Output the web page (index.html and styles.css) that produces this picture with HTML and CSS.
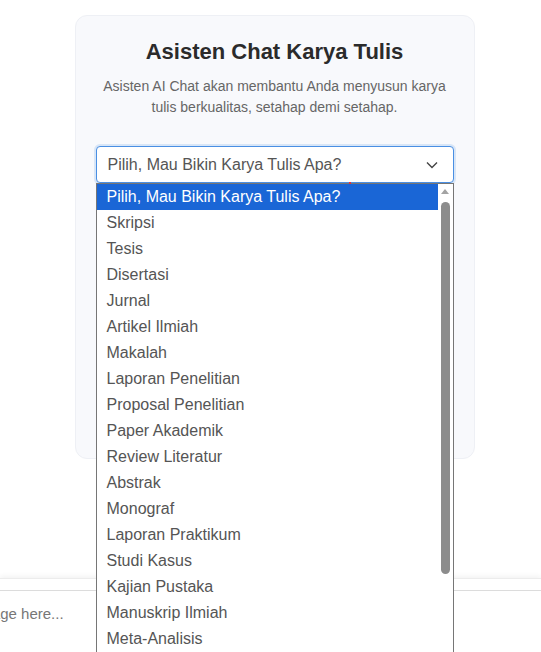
FILE: index.html
```html
<!DOCTYPE html>
<html lang="id">
<head>
<meta charset="utf-8">
<title>Asisten Chat Karya Tulis</title>
<link rel="stylesheet" href="styles.css">
</head>
<body>
<main class="page">
  <section class="card">
    <h1 class="title">Asisten Chat Karya Tulis</h1>
    <p class="subtitle">Asisten AI Chat akan membantu Anda menyusun karya tulis berkualitas, setahap demi setahap.</p>
    <div class="select-wrap">
      <div class="select">
        <span class="select-text">Pilih, Mau Bikin Karya Tulis Apa?</span>
        <svg class="chevron" width="12" height="8" viewBox="0 0 12 8"><polyline points="1,1.5 6,6.5 11,1.5" fill="none" stroke="#444" stroke-width="1.4"/></svg>
      </div>
      <span class="dot"></span>
      <div class="listbox">
        <ul class="options">
          <li class="option selected">Pilih, Mau Bikin Karya Tulis Apa?</li>
          <li class="option">Skripsi</li>
          <li class="option">Tesis</li>
          <li class="option">Disertasi</li>
          <li class="option">Jurnal</li>
          <li class="option">Artikel Ilmiah</li>
          <li class="option">Makalah</li>
          <li class="option">Laporan Penelitian</li>
          <li class="option">Proposal Penelitian</li>
          <li class="option">Paper Akademik</li>
          <li class="option">Review Literatur</li>
          <li class="option">Abstrak</li>
          <li class="option">Monograf</li>
          <li class="option">Laporan Praktikum</li>
          <li class="option">Studi Kasus</li>
          <li class="option">Kajian Pustaka</li>
          <li class="option">Manuskrip Ilmiah</li>
          <li class="option">Meta-Analisis</li>
        </ul>
        <div class="scrollbar">
          <span class="arrow-up"></span>
          <span class="thumb"></span>
        </div>
      </div>
    </div>
  </section>
</main>
<footer class="footer">
  <input class="message" type="text" placeholder="Type your message here...">
</footer>
</body>
</html>
```

FILE: styles.css
```css
* { box-sizing: border-box; }

html, body {
  margin: 0;
  padding: 0;
  height: 100%;
  overflow: hidden;
  background: #ffffff;
  font-family: "Liberation Sans", Arial, sans-serif;
}

.page {
  padding: 15px 0 0 8px;
  display: flex;
  justify-content: center;
}

.card {
  width: 400px;
  height: 444px;
  background: #f8f9fc;
  border: 1px solid #eef0f5;
  border-radius: 12px;
  padding: 20px 20px;
}

.title {
  margin: 0;
  font-size: 22px;
  line-height: 32px;
  font-weight: bold;
  color: #2b2b2b;
  text-align: center;
}

.subtitle {
  margin: 8px -4px 0;
  font-size: 14px;
  line-height: 21px;
  color: #666666;
  text-align: center;
}

.select-wrap {
  position: relative;
  margin-top: 28px;
}

.select {
  height: 37px;
  border: 1px solid #4a8fe3;
  border-radius: 4px;
  background: #ffffff;
  box-shadow: 0 0 0 2px rgba(74, 143, 227, 0.18);
  display: flex;
  align-items: center;
  justify-content: space-between;
  padding: 0 15px 0 11px;
}

.select-text {
  font-size: 16px;
  color: #555555;
}

.chevron { display: block; }

.dot {
  position: absolute;
  top: 36px;
  left: 253px;
  width: 2px;
  height: 2px;
  background: #e0323c;
  z-index: 30;
}

.listbox {
  position: absolute;
  top: 37px;
  left: 0;
  width: 358px;
  height: 472px;
  background: #ffffff;
  border: 1px solid #767676;
  border-bottom: none;
  display: flex;
  z-index: 20;
}

.options {
  list-style: none;
  margin: 0;
  padding: 0;
  flex: 1;
}

.option {
  height: 26px;
  line-height: 26px;
  padding-left: 10px;
  font-size: 16px;
  color: #555555;
  white-space: nowrap;
}

.option.selected {
  background: #1a66d6;
  color: #ffffff;
}

.scrollbar {
  width: 15px;
  flex: none;
  background: #ffffff;
  display: flex;
  flex-direction: column;
  align-items: center;
  padding-top: 5px;
}

.arrow-up {
  width: 0;
  height: 0;
  border-left: 4.5px solid transparent;
  border-right: 4.5px solid transparent;
  border-bottom: 5px solid #a3a3a3;
}

.thumb {
  margin-top: 8px;
  width: 9px;
  height: 372px;
  border-radius: 5px;
  background: #8c8c8c;
}

.footer {
  position: fixed;
  left: 0;
  right: 0;
  bottom: 0;
  height: 74px;
  background: #ffffff;
  border-top: 1px solid #ececec;
  box-shadow: 0 -2px 5px rgba(0, 0, 0, 0.05);
  padding-top: 11px;
  z-index: 10;
}

.message {
  display: block;
  margin-left: -128px;
  width: 760px;
  height: 70px;
  border: 1px solid #dcdcdc;
  border-radius: 6px;
  padding: 0 13px 24px;
  font-family: "Liberation Sans", Arial, sans-serif;
  font-size: 15px;
  color: #333333;
  background: #ffffff;
  outline: none;
}

.message::placeholder {
  color: #777777;
}
```
